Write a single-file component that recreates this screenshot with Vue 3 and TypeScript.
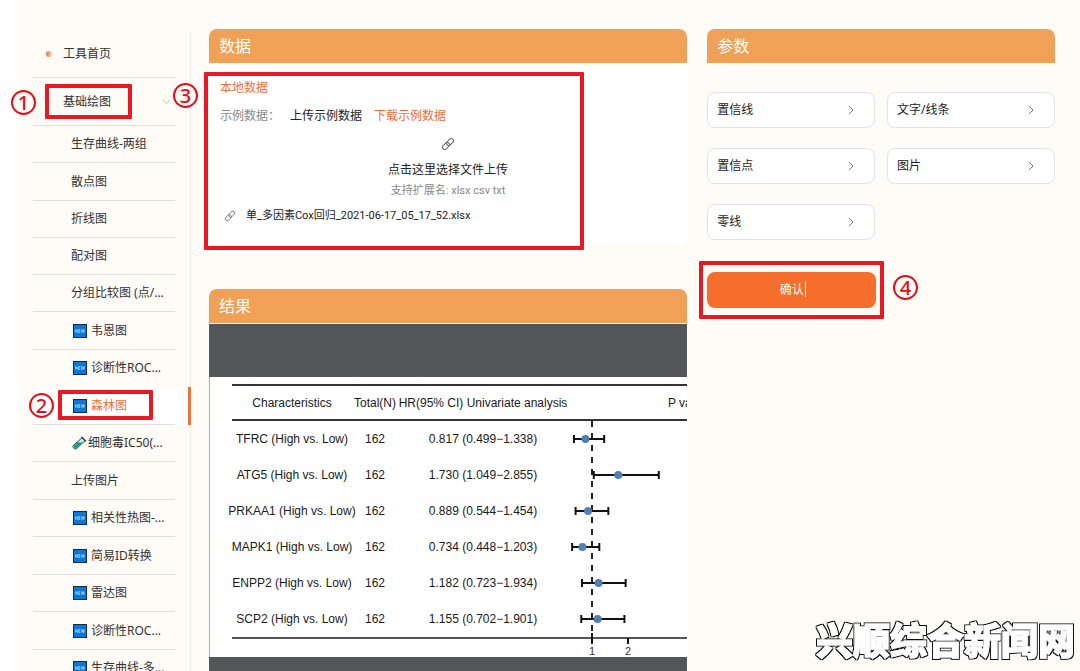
<script setup lang="ts">
interface NavItem {
  label: string
  icon?: 'new' | 'tube'
  active?: boolean
}

interface Estimate {
  name: string
  total: number
  hr: string
  low: string
  high: string
}

const navItems: NavItem[] = [
  { label: '生存曲线-两组' },
  { label: '散点图' },
  { label: '折线图' },
  { label: '配对图' },
  { label: '分组比较图 (点/...' },
  { label: '韦恩图', icon: 'new' },
  { label: '诊断性ROC...', icon: 'new' },
  { label: '森林图', icon: 'new', active: true },
  { label: '细胞毒IC50(...', icon: 'tube' },
  { label: '上传图片' },
  { label: '相关性热图-...', icon: 'new' },
  { label: '简易ID转换', icon: 'new' },
  { label: '雷达图', icon: 'new' },
  { label: '诊断性ROC...', icon: 'new' },
  { label: '生存曲线-多...', icon: 'new' },
]

const estimates: Estimate[] = [
  { name: 'TFRC', total: 162, hr: '0.817', low: '0.499', high: '1.338' },
  { name: 'ATG5', total: 162, hr: '1.730', low: '1.049', high: '2.855' },
  { name: 'PRKAA1', total: 162, hr: '0.889', low: '0.544', high: '1.454' },
  { name: 'MAPK1', total: 162, hr: '0.734', low: '0.448', high: '1.203' },
  { name: 'ENPP2', total: 162, hr: '1.182', low: '0.723', high: '1.934' },
  { name: 'SCP2', total: 162, hr: '1.155', low: '0.702', high: '1.901' },
]

const params: string[] = ['置信线', '文字/线条', '置信点', '图片', '零线']

const unit = 36
const rowHeight = 36
const plotX = (v: string | number): number => 24 + (Number(v) - 1) * unit
const plotY = (i: number): number => i * rowHeight + 18
</script>

<template>
  <div class="page">
    <nav class="sidebar">
      <a class="nav-top" href="#home"><i class="dot"></i>工具首页</a>
      <a class="nav-top" href="#basic">
        <i class="dot faint"></i>基础绘图
        <svg class="nav-arrow" width="9" height="6" viewBox="0 0 9 6"><path d="M1 1l3.5 3.5L8 1" /></svg>
        <span class="mark mark-one"></span>
        <b class="step step-one">1</b>
      </a>
      <ul class="nav-list">
        <li v-for="(item, i) in navItems" :key="i" :class="{ active: item.active }">
          <a :href="'#tool-' + i">
            <svg v-if="item.icon === 'new'" class="icon-new" width="14" height="14" viewBox="0 0 14 14">
              <rect x="0.5" y="0.5" width="13" height="13" fill="#0b78d8" stroke="#15294a" />
              <path d="M2.5 8.5v-3l1.8 3v-3M7.3 5.5h-1.6v3h1.6M5.7 7h1.4M8.3 5.5l.8 3 .8-3 .8 3 .8-3" fill="none" stroke="#b5dcff" stroke-width="0.7" />
            </svg>
            <svg v-else-if="item.icon === 'tube'" class="icon-tube" width="15" height="14" viewBox="0 0 15 14">
              <path d="M10 1.8l3 3L4.8 12.4c-2.2 1.6-5-1-3.3-3.2z" fill="#d8efec" stroke="#28474b" />
              <path d="M5.6 6.2l5.2.4L4.4 12c-1.5.9-3.2-.8-2.3-2.4z" fill="#16a085" />
              <path d="M9.8 1.2l3.8 3.7" stroke="#28474b" stroke-width="1.4" stroke-linecap="round" />
            </svg>
            <span>{{ item.label }}</span>
          </a>
          <template v-if="item.active">
            <span class="mark mark-two"></span>
            <b class="step step-two">2</b>
          </template>
        </li>
      </ul>
    </nav>

    <main class="content">
      <div class="column">
        <section class="data">
          <h2>数据</h2>
          <div class="data-body">
            <div class="local">本地数据</div>
            <div class="sample">
              <span>示例数据：</span>
              <a class="dark" href="#upload-sample">上传示例数据</a>
              <a href="#download-sample">下载示例数据</a>
            </div>
            <button class="upload" type="button">
              <svg width="14" height="14" viewBox="0 0 14 14">
                <g transform="rotate(-45 7 7)">
                  <rect x="0.2" y="4.8" width="8" height="4.4" rx="2.2" />
                  <rect x="5.8" y="4.8" width="8" height="4.4" rx="2.2" />
                </g>
              </svg>
              <span class="upload-title">点击这里选择文件上传</span>
              <span class="upload-hint">支持扩展名: xlsx csv txt</span>
            </button>
            <div class="file">
              <svg width="12" height="12" viewBox="0 0 14 14">
                <g transform="rotate(-45 7 7)">
                  <rect x="0.2" y="4.8" width="8" height="4.4" rx="2.2" />
                  <rect x="5.8" y="4.8" width="8" height="4.4" rx="2.2" />
                </g>
              </svg>
              <span>单_多因素Cox回归_2021-06-17_05_17_52.xlsx</span>
            </div>
            <span class="mark mark-three"></span>
            <b class="step step-three">3</b>
          </div>
        </section>

        <section class="result">
          <h2>结果</h2>
          <div class="viewer">
            <div class="sheet">
              <table>
                <colgroup>
                  <col class="c-name" /><col class="c-total" /><col class="c-hr" /><col class="c-plot" /><col class="c-p" />
                </colgroup>
                <thead>
                  <tr>
                    <th>Characteristics</th>
                    <th>Total(N)</th>
                    <th>HR(95% CI) Univariate analysis</th>
                    <th></th>
                    <th class="p">P value</th>
                  </tr>
                </thead>
                <tbody>
                  <tr v-for="(e, i) in estimates" :key="e.name">
                    <td><div class="name">{{ e.name }} (High vs. Low)</div></td>
                    <td>{{ e.total }}</td>
                    <td>{{ e.hr }} ({{ e.low }}−{{ e.high }})</td>
                    <td v-if="i === 0" :rowspan="estimates.length" class="plot">
                      <svg width="100" height="216" viewBox="0 0 100 216">
                        <line x1="24" y1="0" x2="24" y2="216" class="zero" />
                        <g v-for="(r, k) in estimates" :key="r.name">
                          <line :x1="plotX(r.low)" :x2="plotX(r.high)" :y1="plotY(k)" :y2="plotY(k)" class="bar" />
                          <line :x1="plotX(r.low)" :x2="plotX(r.low)" :y1="plotY(k) - 4" :y2="plotY(k) + 4" class="bar" />
                          <line :x1="plotX(r.high)" :x2="plotX(r.high)" :y1="plotY(k) - 4" :y2="plotY(k) + 4" class="bar" />
                          <circle :cx="plotX(r.hr)" :cy="plotY(k)" r="4" fill="#4f81b3" />
                        </g>
                        <line x1="24" x2="24" y1="212" y2="223" class="bar" />
                        <line x1="60" x2="60" y1="217" y2="223" class="bar" />
                        <text x="24" y="234">1</text>
                        <text x="60" y="234">2</text>
                      </svg>
                    </td>
                    <td></td>
                  </tr>
                </tbody>
              </table>
            </div>
          </div>
        </section>
      </div>

      <section class="params">
        <h2>参数</h2>
        <div class="param-grid">
          <button v-for="p in params" :key="p" type="button" class="param">
            {{ p }}
            <svg width="6" height="10" viewBox="0 0 6 10"><path d="M1 1l4 4-4 4" /></svg>
          </button>
        </div>
        <div class="confirm-row">
          <button type="button" class="confirm"><span>确认</span></button>
          <span class="mark mark-four"></span>
          <b class="step step-four">4</b>
        </div>
      </section>
    </main>

    <svg class="brand" width="264" height="50" viewBox="0 0 264 50" role="img" aria-label="兴顺综合新闻网">
      <defs>
        <filter id="brand-outline" x="-5%" y="-20%" width="110%" height="140%">
          <feMorphology in="SourceAlpha" operator="dilate" radius="1" result="grown" />
          <feFlood flood-color="#111" />
          <feComposite in2="grown" operator="in" result="edge" />
          <feMerge>
            <feMergeNode in="edge" />
            <feMergeNode in="SourceGraphic" />
          </feMerge>
        </filter>
      </defs>
      <text x="2" y="37" filter="url(#brand-outline)">兴顺综合新闻网</text>
    </svg>
  </div>
</template>

<style>
body {
  margin: 0;
  background: #fff;
}
</style>

<style scoped>
.page {
  position: relative;
  display: flex;
  box-sizing: border-box;
  height: 100vh;
  padding-left: 20px;
  overflow: hidden;
  background: linear-gradient(90deg, #fff 20px, #fffbf7 20px);
  color: #333;
  font: 12px/24px "Noto Sans", "Noto Sans CJK SC", sans-serif;
}
a {
  color: inherit;
  text-decoration: none;
}
button {
  padding: 0;
  border: 0;
  background: none;
  color: inherit;
  font: inherit;
  cursor: pointer;
}
h2 {
  margin: 0;
  padding: 0 10px;
  border-radius: 8px 8px 0 0;
  background: #f1a057;
  color: #fff;
  font-size: 16px;
  font-weight: 400;
  line-height: 34px;
}
.sidebar {
  flex: 0 0 157px;
  margin-top: 30px;
  padding-left: 13px;
  border-right: 1px solid #f3eeeb;
}
.nav-top {
  position: relative;
  display: flex;
  align-items: center;
  height: 48px;
  margin-right: 15px;
  padding-left: 13px;
  border-bottom: 1px solid #e4dfdd;
  box-sizing: border-box;
}
.dot {
  width: 6px;
  height: 6px;
  margin-right: 11px;
  border-radius: 3px;
  background: linear-gradient(90deg, #f0713b, #fbd9c9);
}
.dot.faint {
  background: #fdebe6;
}
.nav-arrow {
  margin-left: auto;
  margin-right: 4px;
  fill: none;
  stroke: #efb5ac;
}
.nav-list {
  margin: 0;
  padding: 0;
  list-style: none;
}
.nav-list li {
  position: relative;
  height: 37px;
}
.nav-list li:nth-child(even) {
  height: 38px;
}
.nav-list li:nth-child(4) {
  height: 37px;
}
.nav-list a {
  display: flex;
  align-items: center;
  gap: 4px;
  box-sizing: border-box;
  height: 100%;
  margin-right: 15px;
  padding-left: 38px;
  border-bottom: 1px solid #e4dfdd;
  white-space: nowrap;
}
.nav-list li:nth-child(7) a {
  border-bottom-color: transparent;
}
.nav-list .active {
  border-right: 3px solid #ed7439;
  margin-right: -1px;
  background: #fff;
  color: #ee6f3a;
}
.nav-list .active a {
  margin-right: 13px;
}
.icon-new {
  margin-left: 2px;
}
.icon-tube {
  margin-left: 1px;
  margin-right: -3px;
  fill: none;
}
.content {
  flex: 1;
  display: grid;
  grid-template-columns: 11fr 8fr;
  gap: 20px;
  min-width: 0;
  padding: 29px 25px 0 18px;
}
.column {
  display: flex;
  flex-direction: column;
  gap: 45px;
  min-width: 0;
}
.data-body {
  position: relative;
  display: flex;
  flex-direction: column;
  padding: 13px 11px 16px;
  background: #fff;
}
.local,
.sample a {
  color: #ee6f3a;
}
.sample {
  display: flex;
  margin-top: 4px;
  color: #888;
}
.sample a {
  margin-left: 12px;
}
.sample .dark {
  margin-left: 10px;
  color: #222;
}
.upload {
  display: flex;
  flex-direction: column;
  align-items: center;
  align-self: center;
  margin-top: 9px;
  color: #222;
}
.upload svg,
.file svg {
  fill: none;
  stroke: #666;
}
.upload-title {
  margin-top: 7px;
}
.upload-hint,
.file {
  font-family: Roboto, "Noto Sans CJK SC", sans-serif;
  font-size: 11px;
}
.upload-hint {
  color: #888;
  line-height: 18px;
}
.file {
  display: flex;
  align-items: center;
  gap: 10px;
  margin-top: 4px;
  padding-left: 4px;
  color: #222;
}
.viewer {
  margin-top: 1px;
  padding-top: 53px;
  padding-bottom: 60px;
  background: #525659;
}
.sheet {
  overflow: hidden;
  padding: 7px 0 18px 22px;
  border-left: 1px solid #aaa;
  background: #fff;
}
table {
  width: 500px;
  table-layout: fixed;
  border-collapse: separate;
  border-spacing: 0;
  border-bottom: 2px solid #555;
  color: #1a1a1a;
  font: 12px/14px "Liberation Sans", Arial, sans-serif;
}
.c-name { width: 120px; }
.c-total { width: 46px; }
.c-hr { width: 170px; }
.c-plot { width: 100px; }
.c-p { width: 64px; }
th,
td {
  height: 36px;
  padding: 0;
  text-align: center;
  font-weight: 400;
  white-space: nowrap;
}
th {
  height: 33px;
  border-top: 2px solid #333;
  border-bottom: 2px solid #333;
}
th.p {
  text-align: left;
}
.name {
  margin: 0 -8px;
}
.plot svg {
  display: block;
  overflow: visible;
}
.bar {
  stroke: #111;
  stroke-width: 2;
}
.zero {
  stroke: #222;
  stroke-width: 2;
  stroke-dasharray: 6 6;
}
.plot text {
  fill: #333;
  font-size: 11px;
  text-anchor: middle;
}
.param-grid {
  display: grid;
  grid-template-columns: 1fr 1fr;
  gap: 20px 12px;
  margin-top: 29px;
}
.param {
  display: flex;
  align-items: center;
  justify-content: space-between;
  box-sizing: border-box;
  height: 36px;
  padding: 0 20px 0 9px;
  border: 1px solid #e3e2ea;
  border-radius: 8px;
  background: #fff;
  color: #222;
}
.param svg {
  fill: none;
  stroke: #777;
}
.confirm-row {
  position: relative;
  width: calc(50% - 5px);
  margin-top: 32px;
}
.confirm {
  width: 100%;
  height: 36px;
  border-radius: 8px;
  background: #f56e2c;
  color: #fff;
}
.confirm span {
  position: relative;
}
.confirm span::after {
  content: "";
  position: absolute;
  top: 0;
  right: -2px;
  width: 1px;
  height: 16px;
  background: #fff;
}
.mark {
  position: absolute;
  z-index: 2;
  box-sizing: border-box;
  border: 4px solid #e81923;
  border-radius: 1px;
  pointer-events: none;
}
.step {
  position: absolute;
  z-index: 2;
  box-sizing: border-box;
  width: 25px;
  height: 25px;
  border: 2px solid #e00f1a;
  border-radius: 50%;
  color: #e00f1a;
  font-size: 20px;
  font-weight: 500;
  line-height: 21px;
  text-align: center;
}
.mark-one { left: 12px; top: 6px; width: 87px; height: 35px; }
.step-one { left: -22px; top: 12px; }
.mark-two { left: 25px; top: 3px; width: 95px; height: 30px; }
.step-two { left: -4px; top: 6px; }
.mark-three { left: -5px; top: 9px; width: 380px; height: 178px; }
.step-three { left: -36px; top: 20px; }
.mark-four { inset: -11px -8px; }
.step-four { left: calc(100% + 17px); top: 3px; }
.brand {
  position: absolute;
  right: 2px;
  bottom: 3px;
}
.brand text {
  fill: #fff;
  stroke: #fff;
  stroke-width: 1px;
  font-family: "Noto Sans CJK SC", sans-serif;
  font-size: 37px;
  font-weight: 900;
}
</style>
